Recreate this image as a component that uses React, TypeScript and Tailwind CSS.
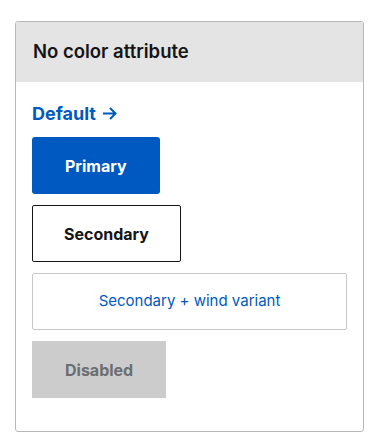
import React from 'react';

const font = { fontFamily: 'Inter, "Noto Sans", sans-serif' };

export default function App() {
  return (
    <div className="min-h-screen bg-white pt-[21px] pl-[15px]" style={font}>
      <div className="w-[349px] rounded-[3px] border border-[#b8b8b8] overflow-hidden">
        <div className="h-[60px] bg-[#e4e4e4] flex items-center px-[17px]">
          <h2 className="text-[18.5px] font-semibold text-[#151515]">No color attribute</h2>
        </div>
        <div className="px-4 pt-[18px] pb-[33px] flex flex-col items-start">
          <a className="h-[26px] flex items-center gap-[6px] text-[18px] font-bold text-[#0059c1] mb-[11px]" href="#">
            Default
            <svg width="15" height="15" viewBox="0 0 15 15" fill="none" stroke="currentColor" strokeWidth="2">
              <path d="M1 7.5h12.5M8 2l5.5 5.5L8 13" />
            </svg>
          </a>
          <div className="flex flex-col gap-[11px] items-start w-full">
            <button className="h-[57px] px-[33px] rounded-[3px] bg-[#0059c1] text-white text-[16px] font-bold">
              Primary
            </button>
            <button className="h-[57px] px-[31px] rounded-[2px] border border-[#151515] text-[#151515] text-[16px] font-bold">
              Secondary
            </button>
            <button className="h-[57px] w-[315px] rounded-[2px] border border-[#c8c8c8] text-[#0059c1] text-[15px]">
              Secondary + wind variant
            </button>
            <button className="h-[57px] px-[33px] bg-[#cccccc] text-[#6a6e73] text-[16px] font-bold">
              Disabled
            </button>
          </div>
        </div>
      </div>
    </div>
  );
}
